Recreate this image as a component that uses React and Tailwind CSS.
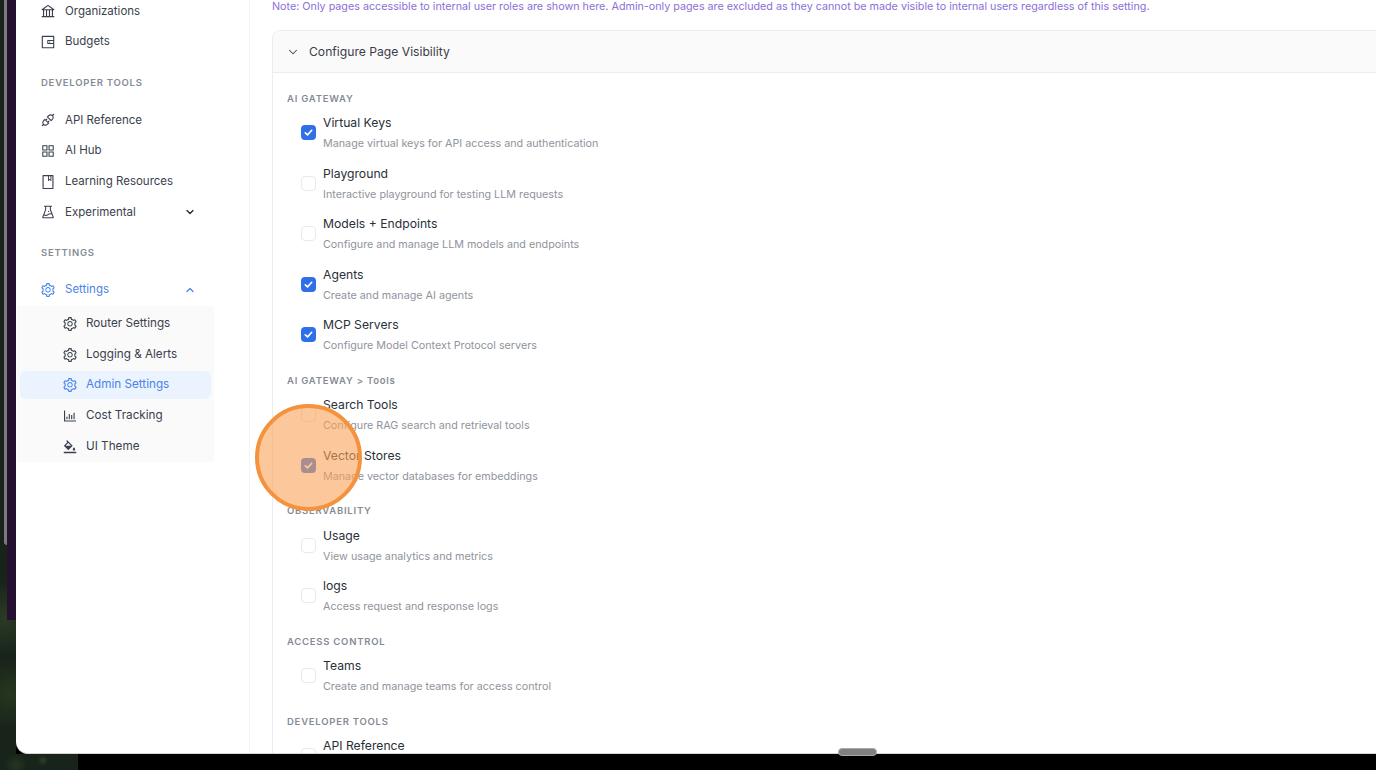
import React from 'react';
import { ChevronDown, ChevronUp } from 'lucide-react';
import {
  AiOutlineBank,
  AiOutlineWallet,
  AiOutlineApi,
  AiOutlineAppstore,
  AiOutlineBook,
  AiOutlineExperiment,
  AiOutlineSetting,
  AiOutlineBarChart,
  AiOutlineBgColors,
} from 'react-icons/ai';

const sections = [
  {
    title: 'AI GATEWAY',
    items: [
      { name: 'Virtual Keys', desc: 'Manage virtual keys for API access and authentication', checked: true },
      { name: 'Playground', desc: 'Interactive playground for testing LLM requests' },
      { name: 'Models + Endpoints', desc: 'Configure and manage LLM models and endpoints' },
      { name: 'Agents', desc: 'Create and manage AI agents', checked: true },
      { name: 'MCP Servers', desc: 'Configure Model Context Protocol servers', checked: true },
    ],
  },
  {
    title: 'AI GATEWAY > Tools',
    items: [
      { name: 'Search Tools', desc: 'Configure RAG search and retrieval tools' },
      { name: 'Vector Stores', desc: 'Manage vector databases for embeddings', checked: true },
    ],
  },
  {
    title: 'OBSERVABILITY',
    items: [
      { name: 'Usage', desc: 'View usage analytics and metrics' },
      { name: 'logs', desc: 'Access request and response logs' },
    ],
  },
  {
    title: 'ACCESS CONTROL',
    items: [{ name: 'Teams', desc: 'Create and manage teams for access control' }],
  },
  {
    title: 'DEVELOPER TOOLS',
    items: [{ name: 'API Reference' }],
  },
];

function NavItem({ icon: Icon, label, chevron, active }) {
  return (
    <div className={`h-[30.7px] flex items-center pl-[24px] pr-[53px] ${active ? 'text-[#4b83e8]' : 'text-[#3a414d]'}`}>
      <Icon className="w-[16px] h-[16px] shrink-0" />
      <span className="ml-[9px] flex-1 text-[11.5px]">{label}</span>
      {chevron === 'down' && <ChevronDown className="w-3 h-3 text-[#1f2937]" strokeWidth={2.5} />}
      {chevron === 'up' && <ChevronUp className="w-3 h-3" strokeWidth={2.5} />}
    </div>
  );
}

function SubItem({ icon: Icon, label, active }) {
  return (
    <div
      className={`h-[28px] mx-[3px] mt-[2.7px] first:mt-0 flex items-center pl-[42px] rounded-md ${
        active ? 'bg-[#eaf3fe] text-[#4b83e8]' : 'text-[#3a414d]'
      }`}
    >
      <Icon className="w-[16px] h-[16px] shrink-0" />
      <span className="ml-[8px] text-[11.7px]">{label}</span>
    </div>
  );
}

function SectionLabel({ children }) {
  return (
    <div className="h-[14px] flex items-center text-[9.5px] font-semibold tracking-[0.08em] text-[#858b95]">
      {children}
    </div>
  );
}

function CheckRow({ name, desc, checked }) {
  return (
    <div className="h-[41px] flex items-center pl-[14px]">
      {checked ? (
        <span className="w-[15px] h-[15px] mb-[1.5px] rounded-[4px] bg-[#2f6fe8] flex items-center justify-center shrink-0">
          <svg viewBox="0 0 12 12" className="w-[11px] h-[11px]" fill="none" stroke="white" strokeWidth="1.8" strokeLinecap="round" strokeLinejoin="round">
            <path d="M2.5 6.3 5 8.6l4.5-5" />
          </svg>
        </span>
      ) : (
        <span className="w-[15px] h-[15px] mb-[1.5px] rounded-[4px] border border-[#e8e9ec] bg-white shrink-0" />
      )}
      <div className="ml-[7px] flex flex-col self-start">
        <span className="h-[20px] leading-[20px] text-[12.2px] text-[#2a2f38]">{name}</span>
        {desc && <span className="mt-[1px] h-[20px] leading-[20px] text-[10.75px] text-[#8f949c]">{desc}</span>}
      </div>
    </div>
  );
}

export default function App() {
  return (
    <div className="w-[1376px] h-[770px] overflow-hidden relative bg-black font-['Inter',sans-serif] flex flex-col">
      <div className="h-[754px] flex shrink-0">
        {/* Desktop edge and window behind */}
        <div className="w-[16px] shrink-0 flex bg-[#18241a] bg-[radial-gradient(circle_at_30%_82%,#2b3a26_0,transparent_6%),radial-gradient(circle_at_60%_92%,#27361f_0,transparent_5%)]">
          <div className="w-[4px]" />
          <div className="w-[3px] h-[545px] bg-[#7c7a80] rounded-bl-[3px]" />
          <div className="w-[9px] h-[620px] bg-[#26102f]" />
        </div>

        {/* App window */}
        <div className="flex-1 min-w-0 flex bg-white rounded-bl-[12px] border-b border-[#d4d4d4] overflow-hidden">
          {/* Sidebar */}
          <aside className="w-[234px] shrink-0 border-r border-[#f3f4f6]">
            <div className="-mt-[4px]">
              <NavItem icon={AiOutlineBank} label="Organizations" />
              <NavItem icon={AiOutlineWallet} label="Budgets" />
            </div>
            <div className="pl-[25px] mt-[19px] h-[14px] flex items-center text-[9.5px] font-semibold tracking-[0.08em] text-[#858b95]">
              DEVELOPER TOOLS
            </div>
            <div className="mt-[14.5px]">
              <NavItem icon={AiOutlineApi} label="API Reference" />
              <NavItem icon={AiOutlineAppstore} label="AI Hub" />
              <NavItem icon={AiOutlineBook} label="Learning Resources" />
              <NavItem icon={AiOutlineExperiment} label="Experimental" chevron="down" />
            </div>
            <div className="pl-[25px] mt-[18.5px] h-[14px] flex items-center text-[9.5px] font-semibold tracking-[0.08em] text-[#858b95]">
              SETTINGS
            </div>
            <div className="mt-[14.5px]">
              <NavItem icon={AiOutlineSetting} label="Settings" chevron="up" active />
            </div>
            <div className="w-[197px] ml-[1px] mt-[1px] bg-[#fafafa] pt-[3.5px] pb-[1px]">
              <SubItem icon={AiOutlineSetting} label="Router Settings" />
              <SubItem icon={AiOutlineSetting} label="Logging & Alerts" />
              <SubItem icon={AiOutlineSetting} label="Admin Settings" active />
              <SubItem icon={AiOutlineBarChart} label="Cost Tracking" />
              <SubItem icon={AiOutlineBgColors} label="UI Theme" />
            </div>
          </aside>

          {/* Main content */}
          <main className="flex-1 min-w-0 pl-[22px] overflow-hidden">
            <p className="-mt-[3px] h-[20px] leading-[20px] text-[10.75px] text-[#8b6fd8] whitespace-nowrap">
              Note: Only pages accessible to internal user roles are shown here. Admin-only pages are excluded as they cannot be made visible to internal users regardless of this setting.
            </p>
            <div className="mt-[13px] w-[1200px] rounded-t-lg border border-[#ececec]">
              <div className="h-[42px] flex items-center pl-[13px] pt-[1px] bg-[#fafafa] border-b border-[#ececec] rounded-t-lg">
                <ChevronDown className="w-[14px] h-[14px] text-[#3f4652]" strokeWidth={1.75} />
                <span className="ml-[9px] text-[12.15px] text-[#3a404a]">Configure Page Visibility</span>
              </div>
              <div className="pt-[19px] pl-[14px] flex flex-col gap-[18px]">
                {sections.map((section) => (
                  <div key={section.title}>
                    <SectionLabel>{section.title}</SectionLabel>
                    <div className="mt-[7px] flex flex-col gap-[9.5px]">
                      {section.items.map((item) => (
                        <CheckRow key={item.name} {...item} />
                      ))}
                    </div>
                  </div>
                ))}
              </div>
            </div>
          </main>
        </div>
      </div>

      {/* Bottom strip */}
      <div className="flex-1 flex">
        <div className="w-[78px] bg-[#18241a] bg-[radial-gradient(circle_at_55%_40%,#2f3f28_0,transparent_12%),radial-gradient(circle_at_20%_70%,#263522_0,transparent_18%)]" />
      </div>

      {/* Scroll handle */}
      <div className="absolute left-[838px] top-[748px] w-[39px] h-[8px] rounded-full bg-[#808080] border border-[#a8a8a8]" />

      {/* Click highlight */}
      <div className="absolute left-[255px] top-[404px] w-[107px] h-[107px] rounded-full bg-[#faa257]/60 border-[4px] border-[#f5923e]" />
    </div>
  );
}
